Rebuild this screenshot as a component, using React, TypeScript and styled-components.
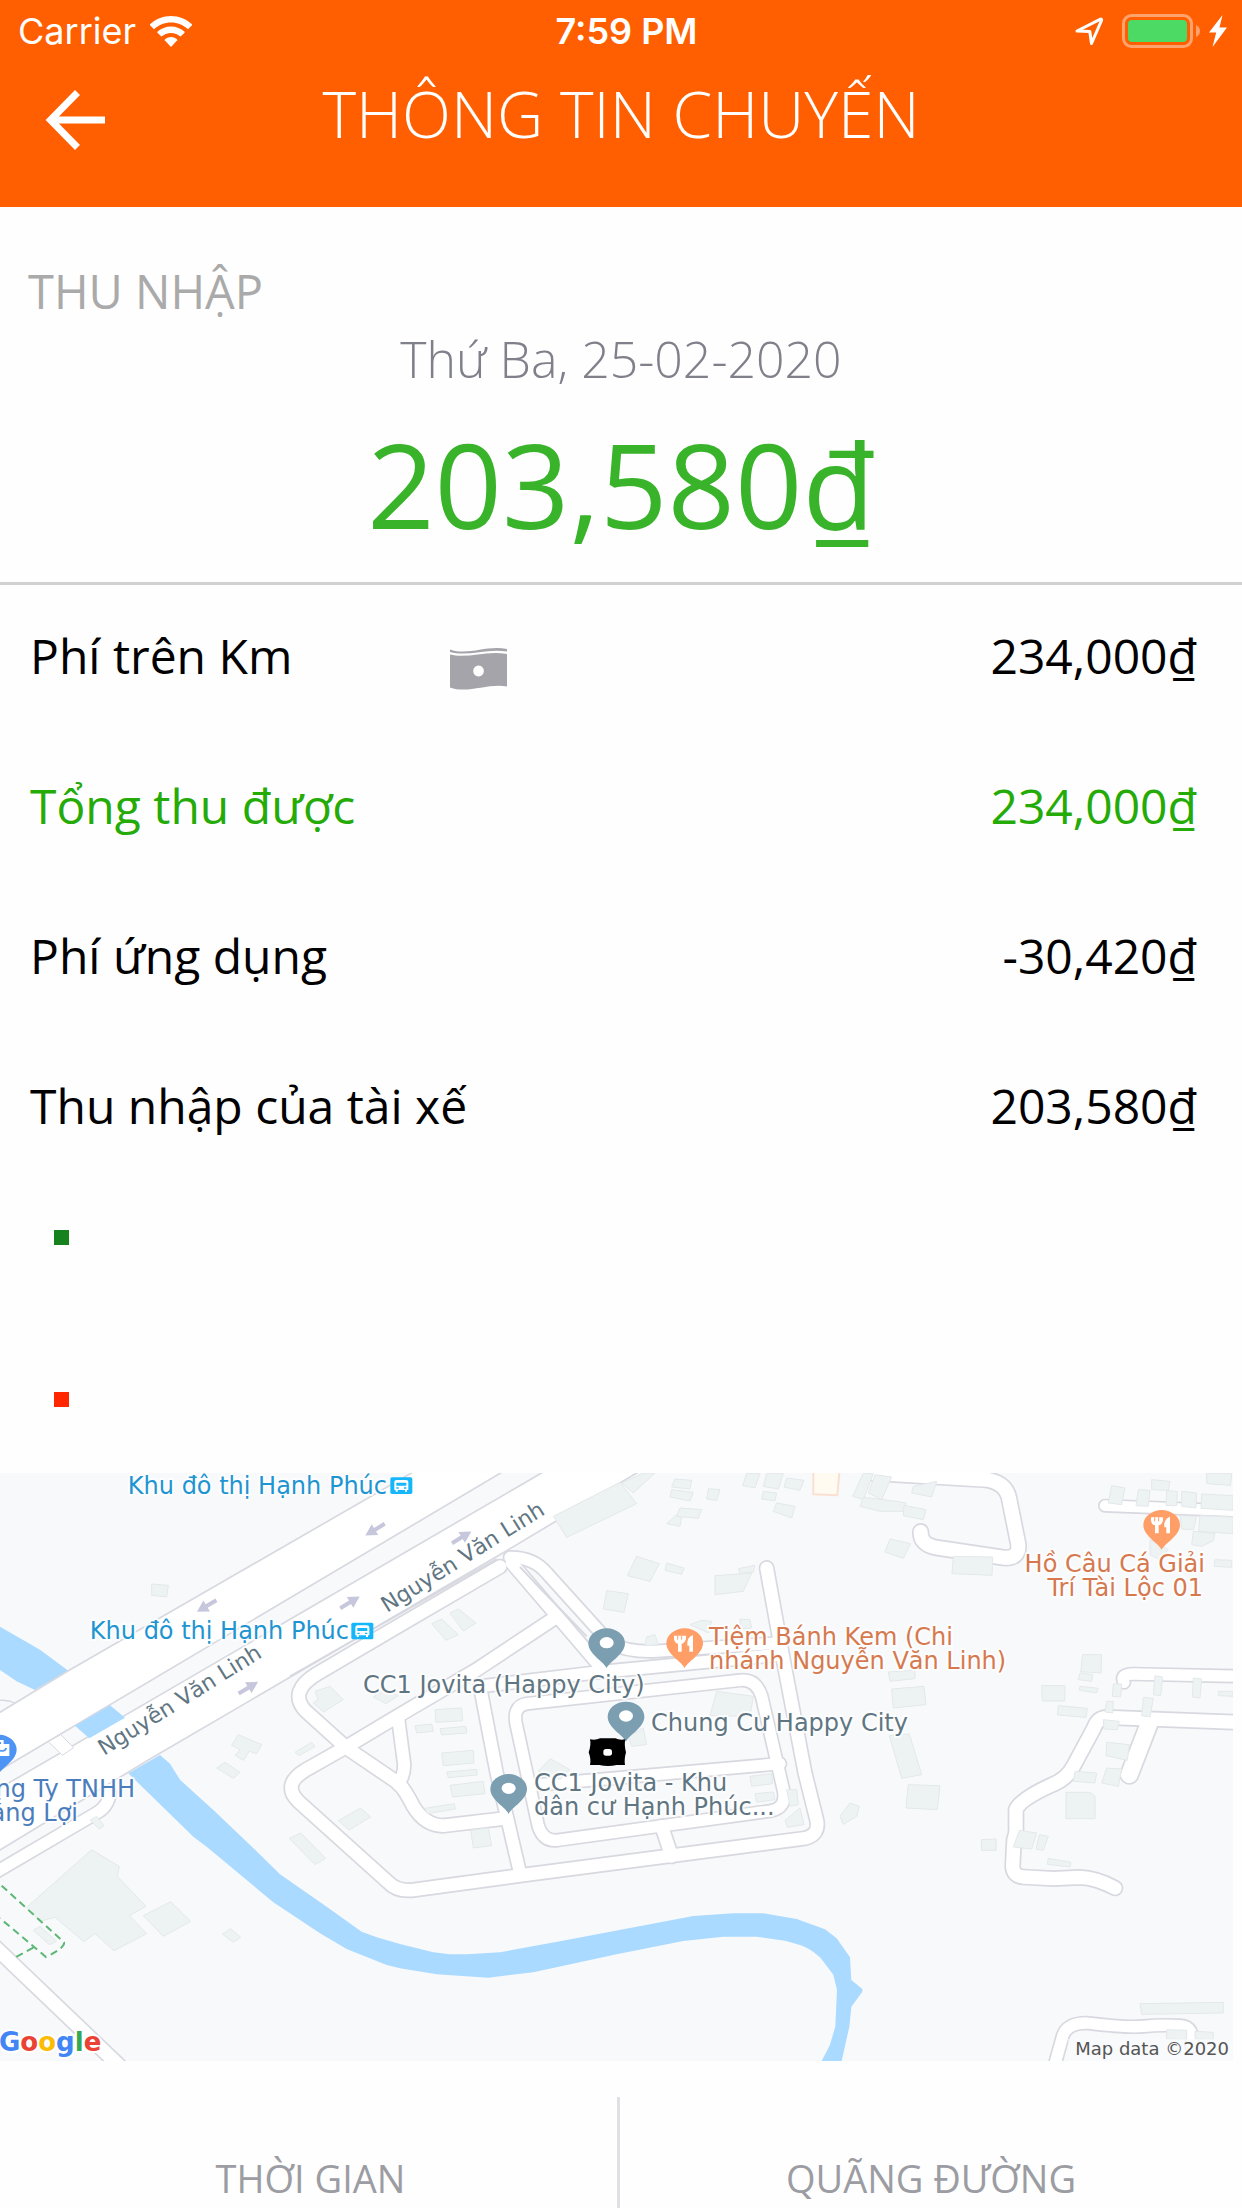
import React from "react";
import styled, { createGlobalStyle } from "styled-components";

const GlobalStyle = createGlobalStyle`
  *, *::before, *::after { box-sizing: border-box; }
  body { margin: 0; background: #fefefe; }
`;

const Screen = styled.div`
  font-family: "Open Sans", "Noto Sans", sans-serif;
  color: #000;
  background: #fefefe;
  overflow: hidden;
`;

const Header = styled.header`
  background: #ff5f00;
  color: #fff;
  height: 207px;
`;

const StatusBar = styled.div`
  display: grid;
  grid-template-columns: 1fr auto 1fr;
  align-items: center;
  height: 62px;
  padding: 0 15px 0 18px;
  font-family: Inter, "Liberation Sans", sans-serif;
  font-size: 36px;
  line-height: 62px;
`;

const StatusGroup = styled.div<{ $end?: boolean }>`
  display: flex;
  align-items: center;
  gap: ${(p) => (p.$end ? 18 : 14)}px;
  justify-content: ${(p) => (p.$end ? "flex-end" : "flex-start")};
`;

const Power = styled.div`
  display: flex;
  align-items: center;
  gap: 9px;
`;

const Clock = styled.time`
  padding-left: 8px;
  font-weight: 600;
`;

const NavBar = styled.nav`
  display: grid;
  grid-template-columns: 1fr auto 1fr;
  align-items: center;
  height: 104px;
  padding: 0 45px;
`;

const BackButton = styled.button`
  display: flex;
  width: 62px;
  padding: 12px 0 0;
  border: 0;
  background: none;
  color: inherit;
  cursor: pointer;
`;

const Title = styled.h1`
  margin: 0;
  font-size: 64px;
  line-height: 84px;
  font-weight: 300;
`;

const Summary = styled.section`
  padding: 52px 28px 23px;
  border-bottom: 3px solid #d1d1d1;
`;

const SectionTitle = styled.h2`
  margin: 0 0 4px;
  font-size: 47px;
  line-height: 64px;
  font-weight: 400;
  color: #aaa;
`;

const TripDate = styled.p`
  margin: 0 0 18px;
  font-size: 50px;
  line-height: 64px;
  font-weight: 300;
  text-align: center;
  color: #80808b;
`;

const Total = styled.p`
  margin: 0;
  font-size: 118px;
  line-height: 150px;
  text-align: center;
  color: #38b32a;
`;

const FareList = styled.dl`
  margin: 0;
`;

const FareRow = styled.div<{ $accent?: boolean }>`
  display: grid;
  grid-template-columns: minmax(420px, auto) 1fr auto;
  align-items: center;
  height: 150px;
  padding: 0 45px 8px 30px;
  font-size: 48px;
  line-height: 64px;
  color: ${(p) => (p.$accent ? "#25ab08" : "#000")};
`;

const FareName = styled.dt`
  grid-column: 1;
`;

const FareValue = styled.dd`
  grid-column: 3;
  margin: 0;
`;

const CashMark = styled.span`
  display: flex;
  padding-top: 26px;
`;

const Stops = styled.ul`
  display: grid;
  gap: 147px;
  margin: 0;
  padding: 45px 54px 66px;
  list-style: none;
`;

const Stop = styled.li<{ $color: string }>`
  width: 15px;
  height: 15px;
  background: ${(p) => p.$color};
`;

const MapFrame = styled.section`
  height: 588px;
  margin-right: 9px;
  background: #f8f9fb;
`;

const MapDrawing = styled.svg`
  display: block;
  width: 100%;
  height: 100%;
`;

const MapLabel = styled.text<{ $color: string; $street?: boolean }>`
  font-family: "DejaVu Sans", Roboto, sans-serif;
  font-size: ${(p) => (p.$street ? 22 : 24)}px;
  fill: ${(p) => p.$color};
  stroke: #fff;
  stroke-width: 4px;
  stroke-linejoin: round;
  stroke-opacity: 0.8;
  paint-order: stroke;
`;

const MapBrand = styled.text`
  font-family: "DejaVu Sans", sans-serif;
  font-size: 26px;
  font-weight: 700;
  stroke: #fff;
  stroke-width: 4px;
  paint-order: stroke;
`;

const MapCredit = styled.text`
  font-family: "DejaVu Sans", sans-serif;
  font-size: 18px;
  fill: #555;
`;

const Metrics = styled.section`
  display: grid;
  grid-template-columns: 1fr 1fr;
  padding-top: 36px;
`;

const Metric = styled.h3`
  margin: 0;
  padding-top: 52px;
  font-size: 38px;
  line-height: 59px;
  font-weight: 400;
  text-align: center;
  color: #9c9ca3;

  & + & {
    margin-left: -4px;
    border-left: 3px solid #dfdfe6;
  }
`;

const WifiIcon = () => (
  <svg width="42" height="31" viewBox="0 0 42 31" fill="#fff" aria-hidden="true">
    <path d="M21 0C13 0 5.700 3.100 0 8.200L0 9.200L4 13.200C8.600 9 14.500 6.500 21 6.500S33.400 9 38 13.200L42 9.200V8.200C36.300 3.100 29 0 21 0Z" />
    <path d="M21 10.500C15.800 10.500 11 12.500 7.400 15.800V16.800L11.400 20.600C14 18.300 17.300 16.900 21 16.900S28 18.300 30.600 20.600L34.600 16.800V15.800C31 12.500 26.200 10.500 21 10.500Z" />
    <path d="M21 21C18.600 21 16.400 21.900 14.800 23.400V24.300L20.500 30.400Q21 30.900 21.500 30.400L27.200 24.300V23.400C25.600 21.900 23.400 21 21 21Z" />
  </svg>
);

const LocationIcon = () => (
  <svg width="29" height="29" viewBox="0 0 29 29" fill="none" stroke="#fff" strokeWidth="3" strokeLinejoin="round" aria-hidden="true">
    <path d="M2 14L25.500 2.200Q27 1.800 26.500 3.500L16.500 26.500L14.800 14.500Z" />
  </svg>
);

const BatteryIcon = () => (
  <svg width="78" height="34" viewBox="0 0 78 34" aria-hidden="true">
    <rect x="1.500" y="1.500" width="68" height="31" rx="8" fill="none" stroke="#fff" strokeOpacity=".42" strokeWidth="3" />
    <rect x="6" y="6" width="59" height="22" rx="4" fill="#4cd964" />
    <path d="M74 11Q78 13 78 17T74 23Z" fill="#fff" fillOpacity=".42" />
  </svg>
);

const BoltIcon = () => (
  <svg width="18" height="32" viewBox="0 0 18 32" fill="#fff" aria-hidden="true">
    <path d="M13.500 0L0 17.500H7.200L3.500 32L18 12.500H10.500Z" />
  </svg>
);

const BackIcon = () => (
  <svg width="60" height="60" viewBox="0 0 60 60" fill="none" stroke="#fff" strokeWidth="7" aria-hidden="true">
    <path d="M32.500 2.500L5.500 30L32.500 57.500M6 30H60" />
  </svg>
);

const CashIcon = () => (
  <svg width="57" height="42" viewBox="0 0 57 42" fill="#a4a4aa" aria-hidden="true">
    <path d="M0 1.500C18 8 36-3 57 1V3.500C36 0 18 9 0 4Z" />
    <path fillRule="evenodd" d="M0 6.500C18 11 36 2 57 6V38.500C38 35 18 46 0 39.500ZM28.500 17.500a5.300 5.500 0 1 0 .1 0Z" />
  </svg>
);

/* The ground layer of the map is drawn on a grid three times finer than the labels. */
const roads: { d: string; w: number }[] = [
  { d: "M-20 1202L290 1020Q325 1000 330 960", w: 34 },
  { d: "M1500 281L1200 456L950 603Q865 655 915 712L1040 825L1195 930Q1215 950 1240 1000Q1275 1058 1330 1058L1520 1036", w: 38 },
  { d: "M1655 441L1430 590L1200 725L1040 821L915 892Q845 935 895 985L1165 1228Q1190 1256 1240 1251L1570 1206L2030 1146L2415 1096Q2460 1085 2450 1040L2415 900L2350 561L2300 285", w: 38 },
  { d: "M1535 270L1800 580", w: 36 },
  { d: "M1530 253Q1600 252 1640 300L1830 510Q1880 537 1960 535L2340 510", w: 34 },
  { d: "M1440 640L1800 597L2340 545", w: 36 },
  { d: "M1440 640L1490 900L1560 1200", w: 36 },
  { d: "M1550 760Q1535 700 1580 692L2220 622Q2268 617 2285 670L2350 950Q2362 1005 2310 1014L1670 1102Q1630 1105 1615 1060Z", w: 34 },
  { d: "M1585 938L2340 872", w: 34 },
  { d: "M1985 1060L2015 1150", w: 38 },
  { d: "M1195 740L1212 870Q1215 900 1195 935", w: 36 },
  { d: "M2620 0L2960 20Q3020 30 3028 80L3055 215Q3058 258 3010 254L2810 224Q2760 215 2762 176", w: 42 },
  { d: "M3315 98L3720 114", w: 32 },
  { d: "M3372 628Q3360 603 3400 603L3720 610", w: 34 },
  { d: "M3720 748L3320 733Q3292 735 3282 765L3220 880Q3200 920 3150 938Q3060 980 3048 1010V1060Q3050 1080 3042 1100L3038 1180Q3040 1210 3070 1212L3160 1217L3240 1213Q3290 1215 3345 1245", w: 40 },
  { d: "M3450 745L3388 905", w: 50 },
  { d: "M3160 1790L3188 1690Q3200 1650 3260 1650Q3380 1665 3430 1660T3540 1658Q3585 1660 3575 1720", w: 34 },
  { d: "M-20 1417L370 1790", w: 40 },
];

const buildings = [
  "455,333 505,337 500,372 455,367",
  "945,655 990,640 1030,680 970,717 940,690 955,680",
  "1120,672 1160,645 1195,668 1158,692",
  "715,785 785,815 770,842 748,835 730,862 705,847 720,830 695,817",
  "885,838 935,808 945,820 898,848",
  "650,885 675,868 720,898 700,916",
  "1660,130 1860,28 1910,92 1700,193",
  "1865,30 1930,0 1965,0 1900,60",
  "2025,18 2075,22 2070,48 2015,42", "2015,50 2080,58 2070,84 2010,72",
  "2125,47 2160,50 2150,82 2120,78", "2000,152 2030,125 2045,132 2040,160",
  "2040,105 2105,110 2095,136 2030,130", "2240,1 2280,1 2265,45 2228,38",
  "2300,1 2350,1 2335,48 2290,40", "2360,15 2412,22 2400,52 2352,42",
  "2290,55 2330,60 2325,83 2285,78", "2330,90 2385,100 2375,135 2320,115",
  "1910,250 1978,272 1950,325 1882,308", "2000,270 2052,285 2045,304 1995,292",
  "1820,353 1885,362 1872,418 1810,408", "2145,308 2255,300 2230,355 2145,365",
  "2215,287 2265,277 2260,297 2220,302", "2070,455 2105,442 2135,445 2125,480",
  "2220,438 2250,440 2255,465 2220,468", "1940,492 1965,485 1975,515 1935,518",
  "1295,452 1325,438 1375,485 1338,502", "1350,420 1375,408 1428,450 1390,474",
  "1305,710 1385,705 1388,743 1308,748", "1245,758 1295,753 1300,775 1250,780",
  "1320,767 1398,760 1400,780 1325,786", "1325,840 1420,832 1422,870 1330,878",
  "1340,897 1430,889 1432,906 1345,914", "1350,937 1450,925 1455,962 1358,972",
  "1275,1006 1363,992 1366,1008 1282,1022", "1412,1072 1465,1065 1475,1118 1420,1125",
  "2150,655 2260,670 2250,730 2130,728", "1885,790 1930,765 1940,815 1895,820",
  "1615,895 1650,857 1710,890 1680,920", "2250,910 2315,902 2318,932 2255,940",
  "2265,962 2320,957 2325,980 2270,988", "2360,950 2390,950 2395,995 2370,1000", "2355,1042 2400,1005 2412,1055 2362,1063",
  "2590,1 2620,2 2590,80 2558,70", "2625,5 2675,12 2645,80 2605,60",
  "2590,73 2690,85 2718,90 2710,115 2640,115 2580,100", "2712,97 2778,110 2770,140 2710,128",
  "2740,40 2810,25 2795,72 2735,60", "2670,198 2732,212 2710,256 2655,237",
  "2860,250 2978,252 2976,307 2856,302",
  "2665,597 2745,592 2745,617 2670,625", "2675,648 2772,640 2778,695 2680,705",
  "2668,788 2728,783 2765,905 2705,916", "2725,935 2820,938 2812,1010 2718,1005",
  "2520,1030 2550,990 2578,1000 2570,1030 2530,1054",
  "2944,1100 2988,1098 2988,1132 2945,1132",
  "3125,638 3195,638 3194,684 3127,684", "3175,698 3262,706 3258,733 3172,726",
  "3248,545 3305,545 3303,600 3242,596", "3240,600 3278,605 3275,625 3235,620", "3240,640 3295,646 3290,660 3238,652",
  "3340,633 3365,633 3362,672 3337,670", "3465,608 3488,612 3482,668 3460,665", "3580,615 3605,618 3600,675 3577,672",
  "3430,673 3460,676 3450,732 3425,728", "3655,655 3699,655 3699,670 3655,668",
  "3320,685 3340,685 3338,720 3315,717", "3310,740 3358,745 3352,770 3312,768",
  "3320,808 3388,815 3382,862 3318,848", "3320,885 3365,888 3355,940 3305,930",
  "3225,895 3290,900 3285,930 3220,925", "3198,958 3270,958 3285,970 3285,1037 3198,1037",
  "3058,1072 3110,1080 3095,1128 3040,1122", "3118,1085 3145,1090 3130,1132 3108,1128",
  "3145,1156 3213,1168 3210,1182 3142,1174",
  "3335,38 3375,45 3365,95 3325,90", "3415,50 3450,52 3445,100 3408,98", "3455,20 3510,25 3505,52 3455,50",
  "3500,53 3532,55 3530,98 3498,98", "3545,55 3590,60 3588,105 3545,100", "3605,63 3699,68 3699,112 3603,106",
  "3620,1 3695,1 3692,37 3620,32", "3540,128 3590,130 3580,170 3545,168", "3600,128 3699,132 3699,182 3596,175",
  "3580,175 3645,182 3640,203 3605,220 3575,215", "3450,200 3505,230 3480,260 3450,245", "3645,260 3695,262 3695,283 3642,280",
  "3420,1592 3670,1588 3670,1620 3425,1624", "3500,1670 3560,1672 3560,1700 3500,1698", "3585,1675 3640,1678 3640,1700 3585,1698",
  "80,1303 275,1130 358,1180 352,1210 438,1300 388,1328 440,1382 342,1433 285,1382 252,1406 165,1333 120,1345",
  "430,1328 512,1286 572,1345 490,1390", "667,1383 692,1367 722,1393 700,1408",
  "100,1372 120,1360 170,1405 148,1415", "270,1042 290,1030 312,1058 298,1068",
  "1015,1043 1082,1005 1112,1032 1048,1071", "868,1096 902,1080 977,1156 945,1175",
];

const arrows = [
  { x: 1125, y: 170, r: 149 },
  { x: 620, y: 399, r: 149 },
  { x: 1050, y: 388, r: -31 },
  { x: 745, y: 644, r: -31 },
  { x: 1385, y: 193, r: -31 },
];

const PIN = "M0 0C-6-18-55-42-55-75A55 45 0 1 1 55-75C55-42 6-18 0 0Z";

const PlacePin = ({ x, y }: { x: number; y: number }) => (
  <g transform={`translate(${x} ${y})`}>
    <path d={PIN} fill="#7b9eb0" />
    <ellipse cy="-77" rx="21" ry="17" fill="#fff" />
  </g>
);

const FoodPin = ({ x, y }: { x: number; y: number }) => (
  <g transform={`translate(${x} ${y})`}>
    <path d={PIN} fill="#ff9e67" />
    <path d="M-32-98H4V-88Q0-76-9-74V-50H-20V-74Q-30-76-32-88ZM25-100V-50H14V-68H8Q6-94 25-100Z" fill="#fff" />
    <path d="M-21-98V-86M-9-98V-86" stroke="#ff9e67" strokeWidth="3" />
  </g>
);

const BusStop = ({ x, y }: { x: number; y: number }) => (
  <g transform={`translate(${x} ${y})`}>
    <rect width="66" height="50" rx="5" fill="#16b6fb" />
    <path fillRule="evenodd" d="M20 8H46Q54 8 54 15V38H50V43H44V38H22V43H16V38H12V15Q12 8 20 8ZM18 16V25H48V16ZM18 30V34H25V30ZM41 30V34H48V30Z" fill="#fff" />
  </g>
);

const TEAL = "#5f7682";
const RUST = "#d6794e";
const TRANSIT = "#1e95d1";
const BUSINESS = "#4a7dbd";

const labels: { text: string; x: number; y: number; color: string; end?: boolean; turn?: number }[] = [
  { text: "Khu đô thị Hạnh Phúc", x: 387, y: 21, color: TRANSIT, end: true },
  { text: "Khu đô thị Hạnh Phúc", x: 349, y: 166, color: TRANSIT, end: true },
  { text: "Nguyễn Văn Linh", x: 104, y: 283, color: TEAL, turn: -32 },
  { text: "Nguyễn Văn Linh", x: 387, y: 140, color: TEAL, turn: -32 },
  { text: "CC1 Jovita (Happy City)", x: 363, y: 220, color: TEAL },
  { text: "Tiệm Bánh Kem (Chi", x: 709, y: 172, color: RUST },
  { text: "nhánh Nguyễn Văn Linh)", x: 709, y: 196, color: RUST },
  { text: "Chung Cư Happy City", x: 651, y: 258, color: TEAL },
  { text: "CC1 Jovita - Khu", x: 534, y: 318, color: TEAL },
  { text: "dân cư Hạnh Phúc...", x: 534, y: 342, color: TEAL },
  { text: "Hồ Câu Cá Giải", x: 1205, y: 99, color: RUST, end: true },
  { text: "Trí Tài Lộc 01", x: 1203, y: 123, color: RUST, end: true },
  { text: "ng Ty TNHH", x: 135, y: 324, color: BUSINESS, end: true },
  { text: "ắng Lợi", x: 78, y: 348, color: BUSINESS, end: true },
];

const TripMap = () => (
  <MapFrame aria-label="Bản đồ chuyến đi">
    <MapDrawing viewBox="0 0 1233 588" preserveAspectRatio="xMinYMin slice">
      <g transform="scale(0.333333)">
        <g fill="#aadaff">
          <path d="M0 461L120 530L205 593L105 651L50 625L0 591Z" />
          <path d="M385 901L480 846L510 872L540 920L640 1011L740 1106L840 1204L980 1301L1085 1376L1130 1393L1200 1413L1300 1438L1350 1444H1400L1500 1438L1700 1401L2080 1329L2200 1321H2290L2390 1338L2475 1369L2510 1396L2550 1453L2554 1521L2587 1548V1556L2554 1601L2548 1661L2525 1764H2465L2490 1715L2506 1660L2511 1550L2500 1505L2462 1455Q2430 1425 2400 1416L2355 1403L2270 1391H2170L2050 1404L1850 1444L1600 1498L1465 1514L1310 1504L1200 1486L1160 1476L1040 1428L960 1381L820 1288L620 1121L580 1091Z" />
        </g>
        <g fill="none" stroke="#d8d8e0" strokeLinecap="round" strokeLinejoin="round">
          {roads.map((road) => (
            <path key={road.d} d={road.d} strokeWidth={road.w + 10} />
          ))}
          <path d="M0 682Q25 680 45 690" strokeWidth="4" />
        </g>
        <g fill="#fff" stroke="#d8d8e0" strokeWidth="5">
          <path d="M-10 724L205 593L1245-6H1512L-10 897Z" />
          <path d="M-10 951L1635-6H1920L1520 233L445 861L-10 1137Z" />
        </g>
        <g fill="none" stroke="#fff" strokeLinecap="round" strokeLinejoin="round">
          {roads.map((road) => (
            <path key={road.d} d={road.d} strokeWidth={road.w} />
          ))}
        </g>
        <path d="M870 610L1490 258" stroke="#d8d8e0" strokeWidth="5" />
        <path d="M1560 282L1640 366L1760 490" fill="none" stroke="#d8d8e0" strokeWidth="6" />
        <path d="M225 758L330 697L375 734L268 796Z" fill="#aadaff" />
        <path d="M145 806L182 785L221 824L187 847Z" fill="#fff" stroke="#d8d8e0" strokeWidth="3" />
        <g fill="#edf2f3" stroke="#e3e8ea" strokeWidth="3">
          {buildings.map((points) => (
            <polygon key={points} points={points} />
          ))}
        </g>
        <path d="M2440 0V64L2512 67L2518 0" fill="#fffbf0" stroke="#fae0d2" strokeWidth="6" />
        <path d="M5 1238L192 1408Q196 1424 138 1452L0 1336M100 1424L40 1456" fill="none" stroke="#5cb775" strokeWidth="6" strokeDasharray="22 14" />
        <g fill="#c6c7dc">
          {arrows.map((a) => (
            <path key={`${a.x}-${a.y}`} transform={`translate(${a.x} ${a.y}) rotate(${a.r})`} d="M-34-6H0V-19L34 0L0 19V6H-34Z" />
          ))}
        </g>
        <BusStop x={1171} y={13} />
        <BusStop x={1054} y={449} />
        <PlacePin x={1820} y={586} />
        <PlacePin x={1878} y={806} />
        <PlacePin x={1526} y={1023} />
        <FoodPin x={2054} y={586} />
        <FoodPin x={3485} y={231} />
        <g transform="translate(-5 905)">
          <path d={PIN} fill="#4e94f5" />
          <path fillRule="evenodd" d="M-26-92H-12V-104H16V-92H33V-56H-26ZM-4-92H8V-98H-4Z" fill="#fff" />
          <path d="M5-72Q20-68 24-80" fill="none" stroke="#4e94f5" strokeWidth="5" />
        </g>
        <path d="M1770 799Q1788 802 1800 796H1846Q1858 802 1876 799Q1872 815 1878 838Q1872 860 1875 876H1850Q1824 882 1798 876H1770Q1774 860 1766 838Q1774 815 1770 799Z" fill="#000" />
        <rect x="1810" y="828" width="26" height="20" rx="8" fill="#fff" />
        <rect x="3205" y="1698" width="494" height="66" fill="#f8f9fb" fillOpacity=".75" />
      </g>
      {labels.map((l) => (
        <MapLabel
          key={`${l.text}-${l.y}`}
          $color={l.color}
          $street={l.turn !== undefined}
          x={l.x}
          y={l.y}
          textAnchor={l.end ? "end" : "start"}
          transform={l.turn ? `rotate(${l.turn} ${l.x} ${l.y})` : undefined}
        >
          {l.text}
        </MapLabel>
      ))}
      <MapBrand x="-1" y="578">
        <tspan fill="#4285f4">G</tspan>
        <tspan fill="#ea4335">o</tspan>
        <tspan fill="#fbbc05">o</tspan>
        <tspan fill="#4285f4">g</tspan>
        <tspan fill="#34a853">l</tspan>
        <tspan fill="#ea4335">e</tspan>
      </MapBrand>
      <MapCredit x="1229" y="582" textAnchor="end">Map data ©2020</MapCredit>
    </MapDrawing>
  </MapFrame>
);

const fares: { name: string; value: string; accent?: boolean; cash?: boolean }[] = [
  { name: "Phí trên Km", value: "234,000₫", cash: true },
  { name: "Tổng thu được", value: "234,000₫", accent: true },
  { name: "Phí ứng dụng", value: "-30,420₫" },
  { name: "Thu nhập của tài xế", value: "203,580₫" },
];

export default function App() {
  return (
    <Screen>
      <GlobalStyle />
      <Header>
        <StatusBar>
          <StatusGroup>
            <span>Carrier</span>
            <WifiIcon />
          </StatusGroup>
          <Clock>7:59 PM</Clock>
          <StatusGroup $end>
            <LocationIcon />
            <Power>
              <BatteryIcon />
              <BoltIcon />
            </Power>
          </StatusGroup>
        </StatusBar>
        <NavBar>
          <BackButton type="button" aria-label="Quay lại">
            <BackIcon />
          </BackButton>
          <Title>THÔNG TIN CHUYẾN</Title>
        </NavBar>
      </Header>
      <main>
        <Summary>
          <SectionTitle>THU NHẬP</SectionTitle>
          <TripDate>Thứ Ba, 25-02-2020</TripDate>
          <Total>203,580₫</Total>
        </Summary>
        <FareList>
          {fares.map((fare) => (
            <FareRow key={fare.name} $accent={fare.accent}>
              <FareName>{fare.name}</FareName>
              {fare.cash && (
                <CashMark>
                  <CashIcon />
                </CashMark>
              )}
              <FareValue>{fare.value}</FareValue>
            </FareRow>
          ))}
        </FareList>
        <Stops>
          <Stop $color="#15821e" />
          <Stop $color="#ff2600" />
        </Stops>
        <TripMap />
        <Metrics>
          <Metric>THỜI GIAN</Metric>
          <Metric>QUÃNG ĐƯỜNG</Metric>
        </Metrics>
      </main>
    </Screen>
  );
}
